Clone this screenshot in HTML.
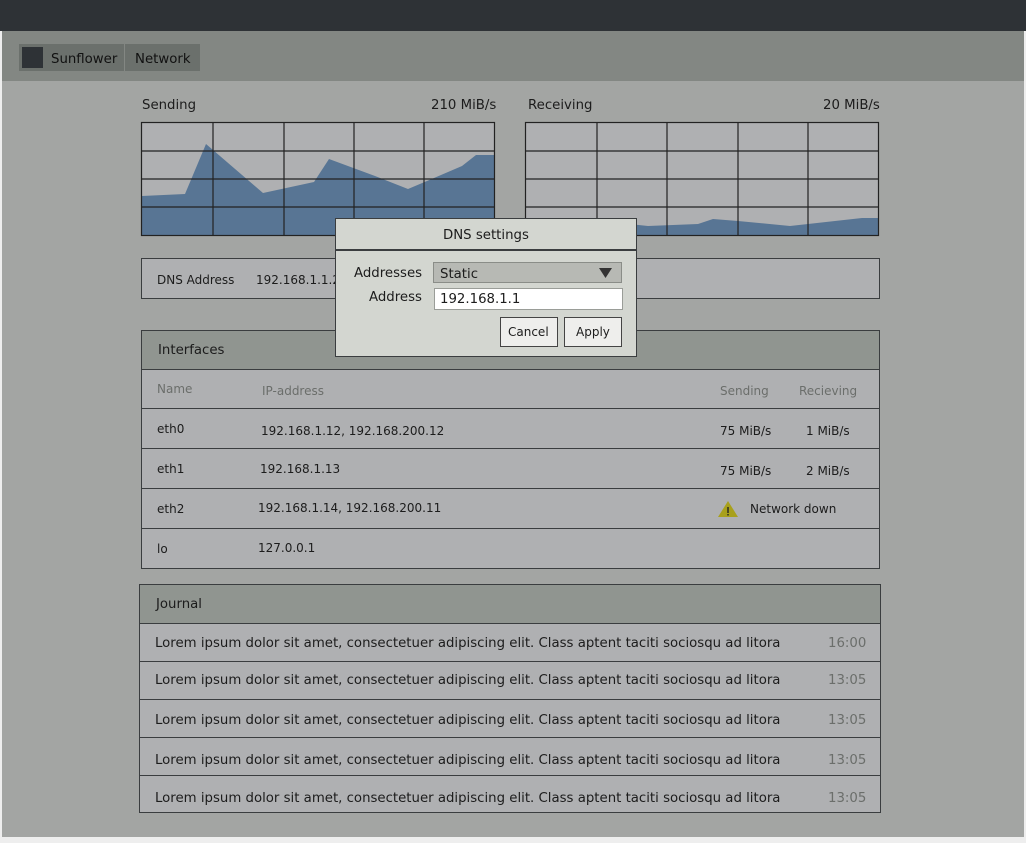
<!DOCTYPE html>
<html><head><meta charset="utf-8"><style>
*{margin:0;padding:0;box-sizing:border-box}
body{width:1026px;height:843px;background:#eeeeee;position:relative;overflow:hidden;font-family:"DejaVu Sans","Liberation Sans",sans-serif;color:#1c1c1c}
.a{position:absolute}
.t{position:absolute;white-space:nowrap;line-height:16px;font-size:13.3px;margin-top:2px}
.t.s{font-size:12px;margin-top:0}
.g{color:#6b6e6b}
.box{position:absolute;border:1px solid #3a3d3f;background:#afb0b2}
.hl{position:absolute;left:0;right:0;height:1px;background:#3a3d3f}
</style></head><body>
<div class="a" style="left:2px;top:0;width:1022px;height:837px;background:#a3a5a3"></div>
<div class="a" style="left:0;top:0;width:1026px;height:31px;background:#2e3236"></div>
<div class="a" style="left:2px;top:31px;width:1022px;height:50px;background:#838783"></div>
<div class="a" style="left:19px;top:44px;width:105px;height:27px;background:#6b706c"></div>
<div class="a" style="left:125px;top:44px;width:75px;height:27px;background:#6b706c"></div>
<div class="a" style="left:22px;top:47px;width:21px;height:21px;background:#2e3236"></div>
<span class="t" style="left:51px;top:50px;color:#111">Sunflower</span>
<span class="t" style="left:135px;top:50px;color:#111">Network</span>

<span class="t" style="left:142px;top:96px">Sending</span>
<span class="t" style="left:431px;top:96px">210 MiB/s</span>
<span class="t" style="left:528px;top:96px">Receiving</span>
<span class="t" style="left:823px;top:96px">20 MiB/s</span>

<svg class="a" style="left:0;top:0" width="1026" height="843">
<rect x="141.5" y="122.5" width="353" height="113" fill="#afb0b2"/>
<polygon points="142,196 185,194 206,144 263,193 314,182 329,159 375,176 408,189 427,181 462,166 476,155 494,155 494,235 142,235" fill="#587594"/>
<g stroke="#222" stroke-width="1.2" fill="none">
<rect x="141.5" y="122.5" width="353" height="113"/>
<path d="M213 122V235M284 122V235M354 122V235M424 122V235M141 151H494M141 179H494M141 207H494"/>
</g>
<rect x="525.5" y="122.5" width="353" height="113" fill="#afb0b2"/>
<polygon points="526,235 586,219 600,221 648,226 698,224 713,219 738,221 790,226 808,224 862,218 878,218 878,235" fill="#587594"/>
<g stroke="#222" stroke-width="1.2" fill="none">
<rect x="525.5" y="122.5" width="353" height="113"/>
<path d="M597 122V235M667 122V235M738 122V235M808 122V235M525 151H878M525 179H878M525 207H878"/>
</g>
</svg>

<div class="box" style="left:141px;top:258px;width:739px;height:41px"></div>
<span class="t s" style="left:157px;top:272px">DNS Address</span>
<span class="t s" style="left:256px;top:272px">192.168.1.1.2</span>

<div class="box" style="left:141px;top:330px;width:739px;height:239px">
<div class="a" style="left:0;top:0;right:0;height:38px;background:#909590"></div>
<div class="hl" style="top:38px"></div>
<div class="hl" style="top:77px"></div>
<div class="hl" style="top:117px"></div>
<div class="hl" style="top:157px"></div>
<div class="hl" style="top:197px"></div>
</div>
<span class="t" style="left:158px;top:341px">Interfaces</span>
<span class="t s g" style="left:157px;top:381px">Name</span>
<span class="t s g" style="left:262px;top:383px">IP-address</span>
<span class="t s g" style="left:720px;top:383px">Sending</span>
<span class="t s g" style="left:799px;top:383px">Recieving</span>
<span class="t s" style="left:157px;top:421px">eth0</span>
<span class="t s" style="left:261px;top:423px">192.168.1.12, 192.168.200.12</span>
<span class="t s" style="left:720px;top:423px">75 MiB/s</span>
<span class="t s" style="left:806px;top:423px">1 MiB/s</span>
<span class="t s" style="left:157px;top:461px">eth1</span>
<span class="t s" style="left:260px;top:461px">192.168.1.13</span>
<span class="t s" style="left:720px;top:463px">75 MiB/s</span>
<span class="t s" style="left:806px;top:463px">2 MiB/s</span>
<span class="t s" style="left:157px;top:501px">eth2</span>
<span class="t s" style="left:258px;top:500px">192.168.1.14, 192.168.200.11</span>
<svg class="a" style="left:718px;top:500px" width="22" height="18"><polygon points="10,1 20,17 0,17" fill="#a8a01c"/><rect x="9.3" y="7" width="1.4" height="6" fill="#222"/><rect x="9.3" y="14" width="1.4" height="1.5" fill="#222"/></svg>
<span class="t s" style="left:750px;top:501px">Network down</span>
<span class="t s" style="left:157px;top:541px">lo</span>
<span class="t s" style="left:258px;top:540px">127.0.0.1</span>

<div class="box" style="left:139px;top:584px;width:742px;height:229px">
<div class="a" style="left:0;top:0;right:0;height:38px;background:#909590"></div>
<div class="hl" style="top:38px"></div>
<div class="hl" style="top:76px"></div>
<div class="hl" style="top:114px"></div>
<div class="hl" style="top:152px"></div>
<div class="hl" style="top:190px"></div>
</div>
<span class="t" style="left:156px;top:595px">Journal</span>
<span class="t" style="left:155px;top:634px">Lorem ipsum dolor sit amet, consectetuer adipiscing elit. Class aptent taciti sociosqu ad litora</span><span class="t g" style="left:828px;top:634px">16:00</span>
<span class="t" style="left:155px;top:671px">Lorem ipsum dolor sit amet, consectetuer adipiscing elit. Class aptent taciti sociosqu ad litora</span><span class="t g" style="left:828px;top:671px">13:05</span>
<span class="t" style="left:155px;top:711px">Lorem ipsum dolor sit amet, consectetuer adipiscing elit. Class aptent taciti sociosqu ad litora</span><span class="t g" style="left:828px;top:711px">13:05</span>
<span class="t" style="left:155px;top:751px">Lorem ipsum dolor sit amet, consectetuer adipiscing elit. Class aptent taciti sociosqu ad litora</span><span class="t g" style="left:828px;top:751px">13:05</span>
<span class="t" style="left:155px;top:789px">Lorem ipsum dolor sit amet, consectetuer adipiscing elit. Class aptent taciti sociosqu ad litora</span><span class="t g" style="left:828px;top:789px">13:05</span>

<!-- dialog -->
<div class="a" style="left:335px;top:218px;width:302px;height:139px;background:#d3d6d0;border:1px solid #3a3d3f">
<div class="a" style="left:0;right:0;top:30px;height:2px;background:#3a3d3f"></div>
</div>
<span class="t" style="left:443px;top:226px">DNS settings</span>
<span class="t" style="left:354px;top:264px">Addresses</span>
<div class="a" style="left:433px;top:262px;width:189px;height:21px;background:#b7b9b4;border:1px solid #8a8d88"></div>
<span class="t" style="left:440px;top:265px">Static</span>
<svg class="a" style="left:599px;top:268px" width="14" height="11"><polygon points="0,0 13,0 6.5,10" fill="#333"/></svg>
<span class="t" style="left:369px;top:288px">Address</span>
<div class="a" style="left:434px;top:288px;width:189px;height:22px;background:#fff;border:1px solid #9a9d98"></div>
<span class="t" style="left:440px;top:290px">192.168.1.1</span>
<div class="a" style="left:500px;top:317px;width:58px;height:30px;background:#eeeeec;border:1px solid #444"></div>
<span class="t s" style="left:508px;top:324px">Cancel</span>
<div class="a" style="left:564px;top:317px;width:58px;height:30px;background:#eeeeec;border:1px solid #444"></div>
<span class="t s" style="left:576px;top:324px">Apply</span>
</body></html>
